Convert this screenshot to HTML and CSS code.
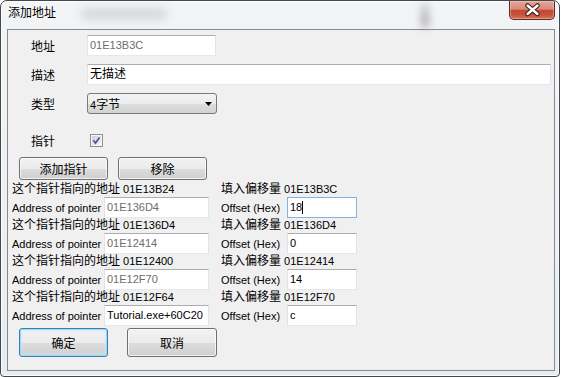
FILE: index.html
```html
<!DOCTYPE html>
<html lang="zh">
  <head>
    <meta charset="UTF-8" />
    <meta name="viewport" content="width=device-width, initial-scale=1.0" />
    <title>添加地址</title>
    <link rel="stylesheet" href="styles.css">
  </head>
  <body>
    <div class="window">
      <div class="titlebar">
        <span class="title zh">添加地址</span>
        <span class="haze haze-a"></span>
        <span class="haze haze-b"></span>
        <div class="close">
          <svg width="46" height="19" viewBox="0 0 46 19">
            <path d="M18.5 5.5 L28.5 14 M28.5 5.5 L18.5 14" stroke="#3a1d18" stroke-width="4.6" stroke-linecap="round" fill="none" />
            <path d="M18.5 5.5 L28.5 14 M28.5 5.5 L18.5 14" stroke="#ffffff" stroke-width="2.4" stroke-linecap="round" fill="none" />
          </svg>
        </div>
      </div>

      <div class="client">
        <div class="row">
          <span class="lbl zh">地址</span>
          <div class="edit ro addr">01E13B3C</div>
        </div>
        <div class="row">
          <span class="lbl zh">描述</span>
          <div class="edit desc zh">无描述</div>
        </div>
        <div class="row">
          <span class="lbl zh">类型</span>
          <div class="combo">
            <span>4<span class="zh">字节</span></span>
            <svg width="7" height="4" viewBox="0 0 7 4"><path d="M0 0H7L3.5 4Z" fill="#000" /></svg>
          </div>
        </div>
        <div class="row row-check">
          <span class="lbl zh">指针</span>
          <svg class="check" width="13" height="13" viewBox="0 0 13 13">
            <defs>
              <linearGradient id="cb" x1="0" y1="0" x2="1" y2="1">
                <stop offset="0" stop-color="#cbcfd5" />
                <stop offset="1" stop-color="#f6f6f6" />
              </linearGradient>
            </defs>
            <rect x="0.5" y="0.5" width="12" height="12" fill="#f6f6f6" stroke="#8e8f8f" />
            <rect x="2" y="2" width="9" height="9" fill="url(#cb)" />
            <path d="M3.3 6.3 L5.5 9 L9.6 3.4" fill="none" stroke="#4a5a96" stroke-width="1.7" />
          </svg>
        </div>
        <div class="buttons">
          <div class="btn zh">添加指针</div>
          <div class="btn zh">移除</div>
        </div>

        <div class="ptrs">
          <div class="entry">
            <div class="cap-l"><span class="zh">这个指针指向的地址</span> 01E13B24</div>
            <div class="cap-r"><span class="zh">填入偏移量</span> 01E13B3C</div>
            <span>Address of pointer</span>
            <div class="edit ro ptr">01E136D4</div>
            <span>Offset (Hex)</span>
            <div class="edit off focus">18<span class="caret"></span></div>
          </div>
          <div class="entry">
            <div class="cap-l"><span class="zh">这个指针指向的地址</span> 01E136D4</div>
            <div class="cap-r"><span class="zh">填入偏移量</span> 01E136D4</div>
            <span>Address of pointer</span>
            <div class="edit ro ptr">01E12414</div>
            <span>Offset (Hex)</span>
            <div class="edit off">0</div>
          </div>
          <div class="entry">
            <div class="cap-l"><span class="zh">这个指针指向的地址</span> 01E12400</div>
            <div class="cap-r"><span class="zh">填入偏移量</span> 01E12414</div>
            <span>Address of pointer</span>
            <div class="edit ro ptr">01E12F70</div>
            <span>Offset (Hex)</span>
            <div class="edit off">14</div>
          </div>
          <div class="entry">
            <div class="cap-l"><span class="zh">这个指针指向的地址</span> 01E12F64</div>
            <div class="cap-r"><span class="zh">填入偏移量</span> 01E12F70</div>
            <span>Address of pointer</span>
            <div class="edit ptr">Tutorial.exe+60C20</div>
            <span>Offset (Hex)</span>
            <div class="edit off">c</div>
          </div>
        </div>

        <div class="footer">
          <div class="btn big default zh">确定</div>
          <div class="btn big wide zh">取消</div>
        </div>
      </div>
    </div>
  </body>
</html>
```

FILE: styles.css
```css
body {
  margin: 0;
  background: #fff;
  font-family: "Liberation Sans", "Noto Sans CJK SC", sans-serif;
  font-size: 11px;
  color: #000;
}
.zh {
  font-size: 12px;
}
.window {
  width: 558px;
  height: 375px;
  border: 1px solid #404850;
  border-radius: 7px 7px 4px 4px;
  background: linear-gradient(#f3f4f6, #e9ecef);
  box-shadow: inset 0 0 0 1px rgba(255, 255, 255, 0.8);
  display: flex;
  flex-direction: column;
  overflow: hidden;
}
.titlebar {
  height: 28px;
  display: flex;
  align-items: flex-start;
  position: relative;
}
.title {
  margin: 4px 0 0 7px;
  line-height: 16px;
  text-shadow: 0 0 6px #fff, 0 0 10px #fff;
  position: relative;
  z-index: 1;
}
.haze {
  position: absolute;
  filter: blur(4px);
  border-radius: 5px;
}
.haze-a {
  left: 80px;
  top: 7px;
  width: 86px;
  height: 12px;
  background: #d6d8db;
}
.haze-b {
  left: 421px;
  top: 2px;
  width: 6px;
  height: 24px;
  background: linear-gradient(#c2cddb, #8a827e);
}
.close {
  margin-left: auto;
  margin-right: 4px;
  width: 46px;
  height: 19px;
  box-sizing: border-box;
  border: 1px solid #5b2a22;
  border-top: none;
  border-radius: 0 0 5px 5px;
  background: linear-gradient(#e6a597 0%, #d8897a 45%, #c44a36 52%, #c7503b 75%, #d9725b 100%);
  box-shadow: inset 0 0 0 1px rgba(255, 210, 200, 0.45);
  position: relative;
  z-index: 1;
}
.close svg {
  display: block;
  margin: -1px 0 0 -1px;
}
.client {
  flex: 1;
  margin: 0 4px 5px 6px;
  border: 1px solid #868a8f;
  background: #f0f0f0;
  padding-top: 5px;
}
.row {
  display: flex;
  align-items: center;
  height: 21px;
  padding-left: 23px;
}
.row + .row {
  margin-top: 8px;
}
.row.row-check {
  margin-top: 16px;
}
.lbl {
  width: 56px;
}
.edit {
  box-sizing: border-box;
  height: 21px;
  border: 1px solid #e2e3ea;
  border-top-color: #abadb3;
  border-bottom-color: #e3e9ef;
  background: #fff;
  padding: 0 2px;
  line-height: 19px;
  white-space: nowrap;
  overflow: hidden;
}
.ro {
  color: #6d6d6d;
}
.addr {
  width: 129px;
}
.desc {
  width: 464px;
}
.combo {
  box-sizing: border-box;
  width: 130px;
  height: 21px;
  border: 1px solid #7a7a7a;
  border-radius: 3px;
  background: linear-gradient(#f3f3f3 0%, #ececec 50%, #dedede 51%, #d2d2d2 100%);
  display: flex;
  align-items: center;
  justify-content: space-between;
  padding: 0 4px 0 2px;
}
.combo svg {
  display: block;
}
.check {
  display: block;
  margin-left: 3px;
}
.buttons {
  display: flex;
  gap: 10px;
  margin-top: 6px;
  padding-left: 11px;
}
.btn {
  box-sizing: border-box;
  width: 89px;
  height: 23px;
  border: 1px solid #707070;
  border-radius: 3px;
  background: linear-gradient(#f2f2f2 0%, #ebebeb 50%, #dddddd 51%, #cfcfcf 100%);
  box-shadow: inset 0 0 0 1px rgba(255, 255, 255, 0.7);
  display: flex;
  align-items: center;
  justify-content: center;
}
.ptrs {
  margin-top: 2px;
  padding-left: 4px;
}
.entry {
  display: grid;
  grid-template-columns: 92px 117px 66px 70px;
  grid-template-rows: 15px 21px;
  align-items: center;
}
.cap-l {
  grid-column: 1 / 3;
  line-height: 15px;
}
.cap-r {
  grid-column: 3 / 5;
  line-height: 15px;
}
.ptr {
  width: 105px;
}
.off {
  width: 70px;
}
.focus {
  border-color: #7eb4ea;
}
.caret {
  display: inline-block;
  width: 1px;
  height: 13px;
  background: #000;
  vertical-align: -3px;
}
.footer {
  display: flex;
  gap: 19px;
  margin-top: 2px;
  padding-left: 11px;
}
.btn.big {
  height: 29px;
}
.btn.wide {
  width: 90px;
}
.btn.default {
  border-color: #3c7fb1;
  box-shadow: inset 0 0 0 1px #9ad8f6, inset 0 0 2px 2px rgba(200, 235, 252, 0.6);
}
```
